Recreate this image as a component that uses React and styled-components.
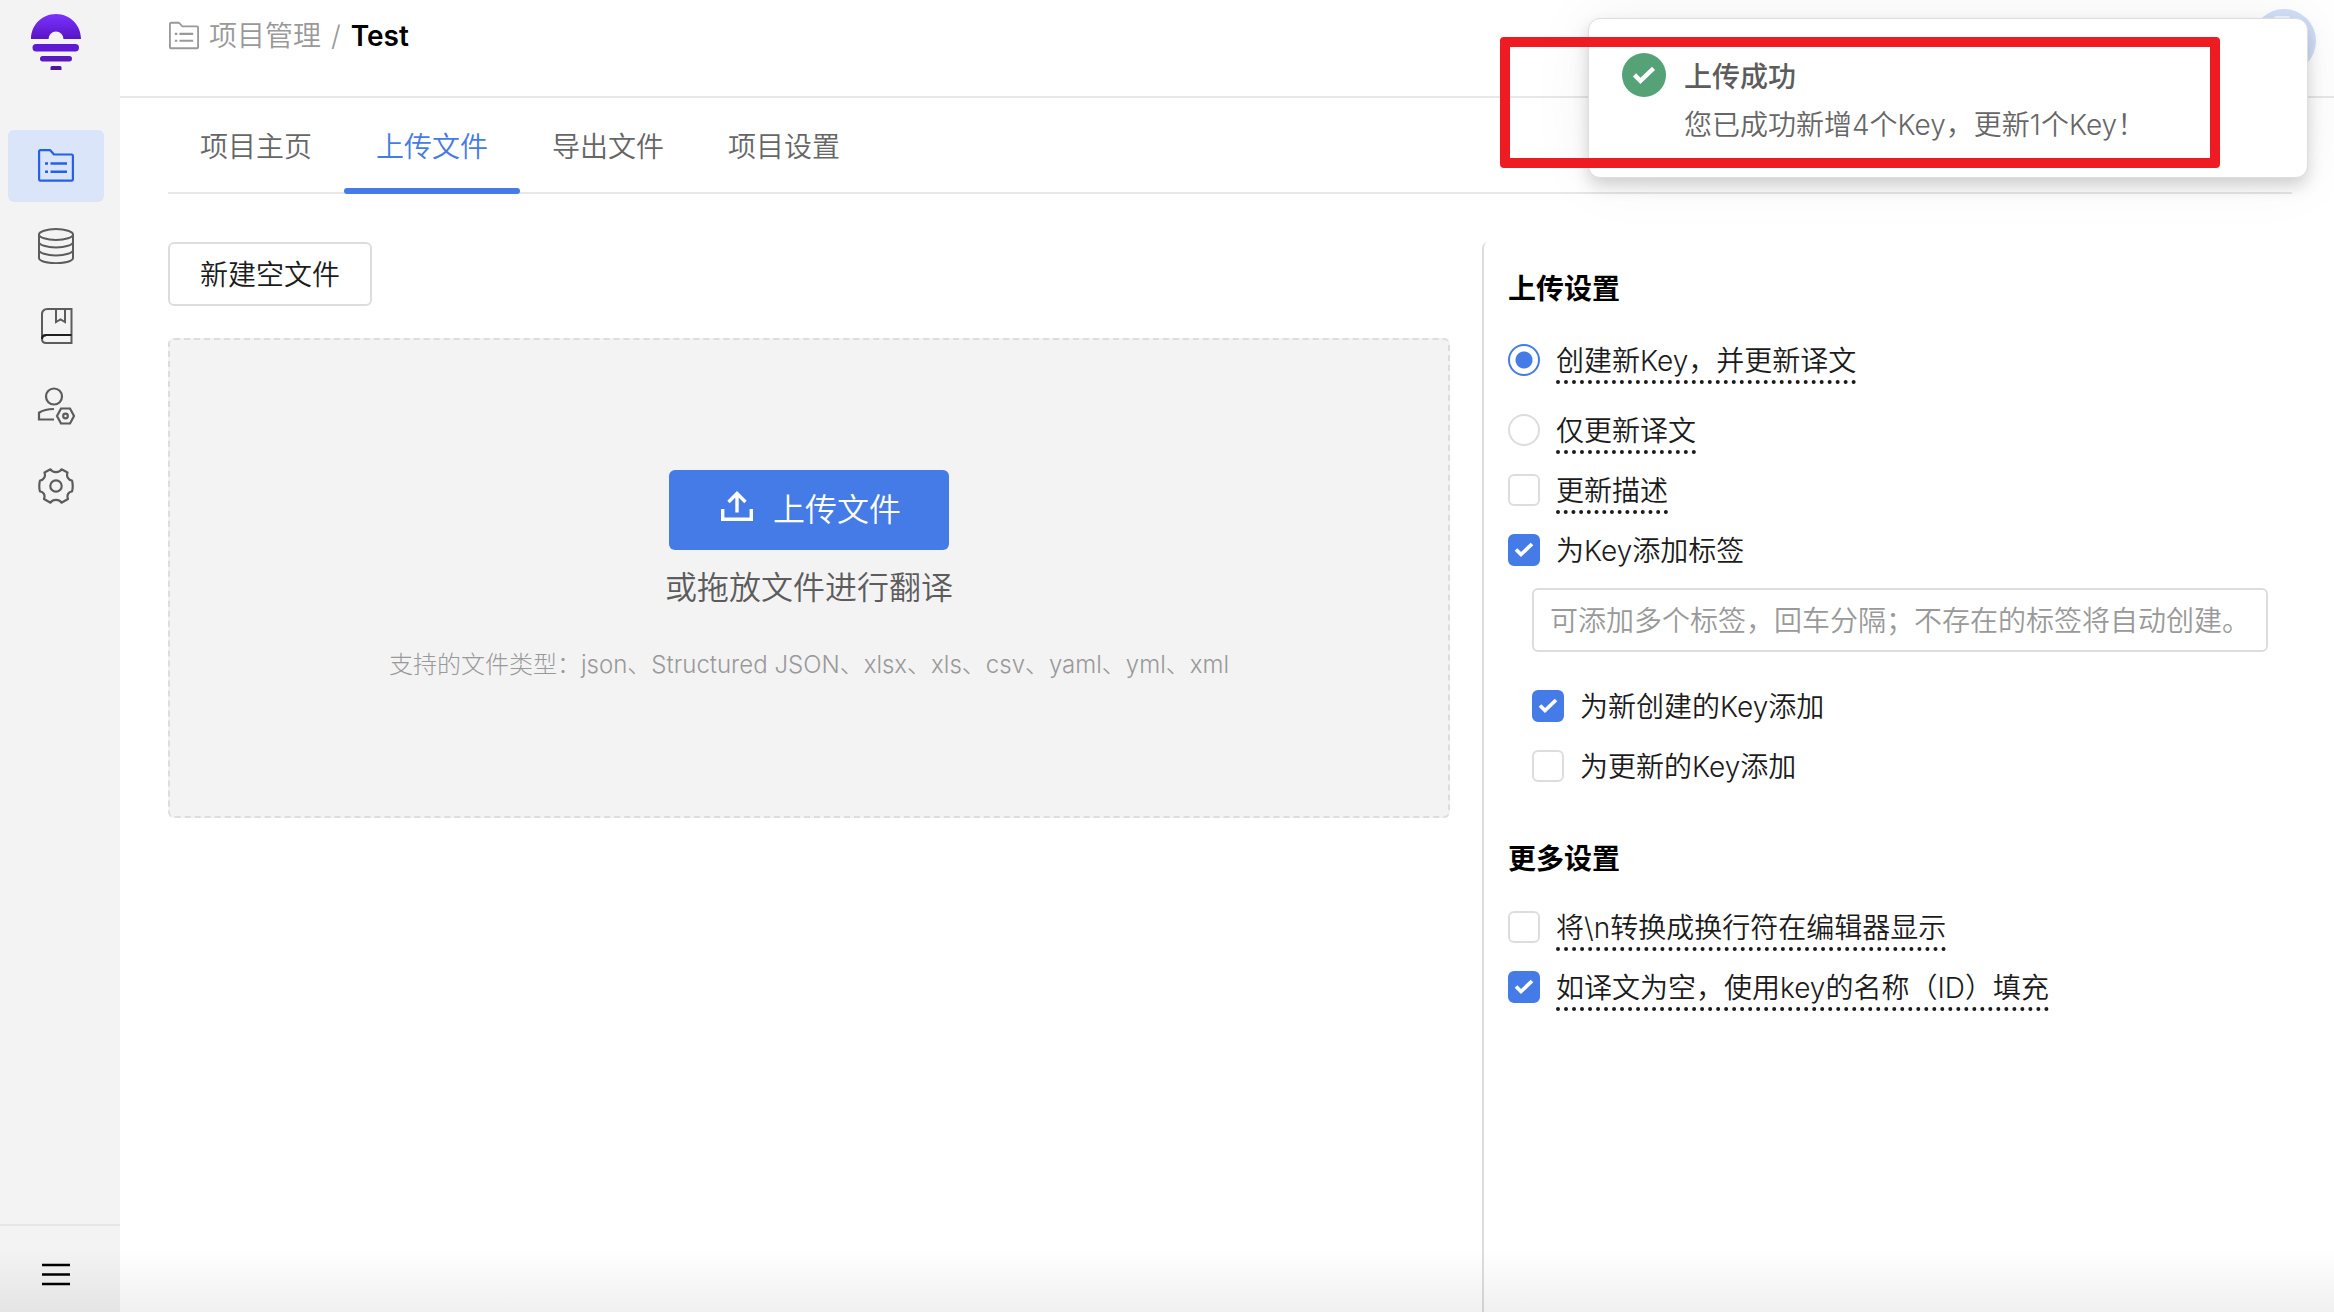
import React from "react";
import styled, { createGlobalStyle, css } from "styled-components";

const GlobalStyle = createGlobalStyle`
  * {
    box-sizing: border-box;
  }

  body {
    margin: 0;
    background: #fff;
    color: #1b1b1b;
    font-family: Inter, "Noto Sans CJK SC", sans-serif;
    font-size: 28px;
    font-weight: 350;
    line-height: 40px;
  }

  button,
  input {
    font: inherit;
  }

  a {
    color: inherit;
    text-decoration: none;
  }
`;

const FolderIcon = ({ size }) => (
  <svg width={size} height={size} viewBox="0 0 36 36" fill="none" stroke="currentColor" strokeWidth="2.2" strokeLinejoin="round">
    <path d="M1.1 4v27.4c0 .8.5 1.3 1.3 1.3h31.2c.8 0 1.3-.5 1.3-1.3V7.8c0-.8-.5-1.3-1.3-1.3H16L12 2.1H2.4c-.8 0-1.3.5-1.3 1.3z" />
    <path d="M7 15.5h3M12.5 15.5H29M7 23.7h3M12.5 23.7H29" strokeWidth="2.6" />
  </svg>
);

const DatabaseIcon = () => (
  <svg width="36" height="36" viewBox="0 0 36 36" fill="none" stroke="#5c5c5c" strokeWidth="2">
    <ellipse cx="18" cy="6.5" rx="17" ry="5.4" />
    <path d="M1 6.5v23.5c0 2.9 7.6 5.2 17 5.2s17-2.3 17-5.2V6.5" />
    <path d="M1 14c0 3 7.6 5.4 17 5.4S35 17 35 14M1 22c0 3 7.6 5.4 17 5.4S35 25 35 22" />
  </svg>
);

const BookIcon = () => (
  <svg width="36" height="36" viewBox="0 0 36 36" fill="none" stroke="#5c5c5c" strokeWidth="2">
    <path d="M4 31V6.5C4 3 6 1 9.5 1H33.5v34H8c-2.5 0-4-1.5-4-4s1.5-3.5 4-3.5" />
    <path d="M4 31c0-2.5 1.5-4 4-4h25.5" stroke="#1f1f1f" />
    <path d="M18 1v13l4.5-2.5 4.5 2.5V1" />
  </svg>
);

const MemberIcon = () => (
  <svg width="38" height="38" viewBox="0 0 38 38" fill="none" stroke="#5c5c5c" strokeWidth="2.2">
    <circle cx="17" cy="9.5" r="8" />
    <path d="M17 22C10 22.2 5.5 23.5 2 25.7V32.5h15" />
    <path d="M24 21.5h9l4 7.5-4 7.5h-9l-4-7.5z" />
    <circle cx="28.5" cy="29" r="2.3" />
  </svg>
);

const GearIcon = () => (
  <svg width="36" height="36" viewBox="0 0 36 36" fill="none" stroke="#5c5c5c" strokeWidth="2.2" strokeLinejoin="round">
    <path d="M12.5 1.3C14.5 5 21.5 5 23.5 1.3L29.5 4.5C28 8.5 30.500 12.2 34 12.5Q35.500 18 34 23.5C30.500 23.8 28.500 27 30 31L23.500 34.700C21 31 15 31 12.500 34.700L6 31C7.500 27 5.500 23.800 2 23.500Q.5 18 2 12.500C5.500 12.200 8 8.500 6.500 4.500Z" />
    <circle cx="18" cy="18" r="5.7" />
  </svg>
);

const Logo = () => (
  <svg width="50" height="56" viewBox="0 0 50 56">
    <defs>
      <linearGradient id="logo" x1="0" y1="0" x2="0" y2="1">
        <stop offset="0" stopColor="#7a33ff" />
        <stop offset="1" stopColor="#5a14c4" />
      </linearGradient>
    </defs>
    <path d="M0 25C0 11 11 0 25 0s25 11 25 25H32.5a7.5 7.5 0 0 0-15 0z" fill="url(#logo)" />
    <rect x="1.5" y="30" width="46.5" height="7.5" rx="3.7" fill="#5f18d4" />
    <rect x="9" y="42" width="32" height="5.5" rx="2.7" fill="#5919bd" />
    <path d="M19.5 56v-2.5q0-1.5 1.5-1.5h8q1.5 0 1.5 1.5V56z" fill="#4e159f" />
  </svg>
);

const MenuIcon = () => (
  <svg width="28" height="24" viewBox="0 0 28 24" stroke="#000" strokeWidth="2.6">
    <path d="M0 2h28M0 11.500h28M0 21h28" />
  </svg>
);

const UploadIcon = () => (
  <svg width="32" height="38" viewBox="0 0 32 38" fill="none" stroke="#fff" strokeWidth="3.4">
    <path d="M1.7 18v10.3h28.6V18M16 21.5V2.5M7.5 11L16 2.5l8.5 8.5" />
  </svg>
);

const Tick = ({ width = 20, height = 16 }) => (
  <svg width={width} height={height} viewBox="0 0 20 16" fill="none" stroke="#fff" strokeWidth="3.7">
    <path d="M2 7.5l5 5L18 2" />
  </svg>
);

const navItems = [
  { label: "项目管理", icon: <FolderIcon size={36} />, active: true },
  { label: "数据", icon: <DatabaseIcon /> },
  { label: "术语库", icon: <BookIcon /> },
  { label: "成员", icon: <MemberIcon /> },
  { label: "设置", icon: <GearIcon /> },
];

const tabs = ["项目主页", "上传文件", "导出文件", "项目设置"];

const Option = ({ type = "checkbox", name, checked, dotted, children }) => (
  <StyledOption>
    <Control>
      <ControlInput type={type} name={name} defaultChecked={checked} />
      {type === "checkbox" && <Tick />}
    </Control>
    <OptionText $dotted={dotted}>{children}</OptionText>
  </StyledOption>
);

const App = () => (
  <Page>
    <GlobalStyle />
    <Sidebar>
      <LogoLink href="#" aria-label="Home">
        <Logo />
      </LogoLink>
      <Nav>
        {navItems.map(({ label, icon, active }) => (
          <NavLink key={label} href="#" aria-label={label} $active={active}>
            {icon}
          </NavLink>
        ))}
      </Nav>
      <MenuButton aria-label="菜单">
        <MenuIcon />
      </MenuButton>
    </Sidebar>

    <Main>
      <Header>
        <Crumb href="#">
          <FolderIcon size={30} />
          项目管理
        </Crumb>
        <Slash>/</Slash>
        <Current>Test</Current>
        <Avatar viewBox="0 0 64 64">
          <circle cx="32" cy="32" r="32" fill="#d2dff8" />
          <rect x="22" y="7" width="16" height="6" rx="2" fill="#f0f4fd" />
        </Avatar>
      </Header>

      <Tabs>
        {tabs.map((tab) => (
          <Tab key={tab} href="#" $active={tab === "上传文件"}>
            {tab}
          </Tab>
        ))}
      </Tabs>

      <Content>
        <Files>
          <NewFileButton>新建空文件</NewFileButton>
          <DropZone>
            <UploadButton>
              <UploadIcon />
              上传文件
            </UploadButton>
            <DropText>或拖放文件进行翻译</DropText>
            <Hint>支持的文件类型：json、Structured JSON、xlsx、xls、csv、yaml、yml、xml</Hint>
          </DropZone>
        </Files>

        <Settings>
          <Title>上传设置</Title>
          <RadioGroup>
            <Option type="radio" name="mode" checked dotted>
              创建新Key，并更新译文
            </Option>
            <Option type="radio" name="mode" dotted>
              仅更新译文
            </Option>
          </RadioGroup>
          <Options>
            <Option dotted>更新描述</Option>
            <Option checked>为Key添加标签</Option>
          </Options>
          <TagSettings>
            <TagInput aria-label="标签" placeholder="可添加多个标签，回车分隔；不存在的标签将自动创建。" />
            <Options>
              <Option checked>为新创建的Key添加</Option>
              <Option>为更新的Key添加</Option>
            </Options>
          </TagSettings>
          <Title>更多设置</Title>
          <Options>
            <Option dotted>将\n转换成换行符在编辑器显示</Option>
            <Option checked dotted>
              如译文为空，使用key的名称（ID）填充
            </Option>
          </Options>
        </Settings>
      </Content>
    </Main>

    <Toast role="status">
      <ToastIcon>
        <Tick width={24} height={19} />
      </ToastIcon>
      <div>
        <ToastTitle>上传成功</ToastTitle>
        <ToastText>您已成功新增4个Key，更新1个Key！</ToastText>
      </div>
    </Toast>
    <Highlight />
    <BottomShade />
  </Page>
);

export default App;

const Page = styled.div`
  position: relative;
  display: flex;
  min-height: 100vh;
`;

const Sidebar = styled.aside`
  display: flex;
  flex-direction: column;
  flex: none;
  width: 120px;
  background: #f3f3f3;
`;

const LogoLink = styled.a`
  display: flex;
  padding: 14px 0 0 31px;
`;

const Nav = styled.nav`
  display: flex;
  flex-direction: column;
  gap: 8px;
  margin: 60px 16px 0 8px;
`;

const NavLink = styled.a`
  display: flex;
  align-items: center;
  justify-content: center;
  height: 72px;
  border-radius: 6px;
  color: #2461e6;
  background: ${({ $active }) => ($active ? "#dae5f9" : "transparent")};
`;

const MenuButton = styled.button`
  display: flex;
  align-items: center;
  height: 88px;
  margin-top: auto;
  padding: 12px 42px 0;
  border: 0;
  border-top: 2px solid #e7e7e7;
  background: none;
`;

const Main = styled.main`
  display: flex;
  flex-direction: column;
  flex: 1;
  min-width: 0;
`;

const Header = styled.header`
  display: flex;
  align-items: flex-start;
  height: 98px;
  padding: 16px 18px 0 49px;
  border-bottom: 2px solid #e7e7e7;
`;

const Crumb = styled.a`
  display: flex;
  align-items: center;
  gap: 10px;
  color: #999;
`;

const Slash = styled.span`
  margin: 0 10px;
  color: #999;
`;

const Current = styled.span`
  color: #000;
  font-weight: 600;
`;

const Avatar = styled.svg`
  width: 64px;
  height: 64px;
  margin: -7px 0 0 auto;
`;

const Tabs = styled.nav`
  display: flex;
  height: 96px;
  margin: 0 42px 0 48px;
  border-bottom: 2px solid #e7e7e7;
`;

const Tab = styled.a`
  position: relative;
  padding: 29px 32px 0;
  color: #666;

  ${({ $active }) =>
    $active &&
    css`
      color: #457be6;

      &::after {
        content: "";
        position: absolute;
        right: 0;
        bottom: -2px;
        left: 0;
        height: 6px;
        border-radius: 3px;
        background: #457be6;
      }
    `}
`;

const Content = styled.div`
  display: flex;
  flex: 1;
  gap: 32px;
  padding: 48px 42px 0 48px;
`;

const Files = styled.section`
  flex: 1;
  min-width: 0;
`;

const NewFileButton = styled.button`
  display: block;
  height: 64px;
  padding: 1px 30px 0;
  border: 2px solid #ddd;
  border-radius: 6px;
  background: #fff;
  color: #1b1b1b;
`;

const DropZone = styled.div`
  display: flex;
  flex-direction: column;
  align-items: center;
  height: 480px;
  margin-top: 32px;
  padding-top: 130px;
  border: 2px dashed #ddd;
  border-radius: 6px;
  background: #f3f3f3;
`;

const UploadButton = styled.button`
  display: flex;
  align-items: center;
  justify-content: center;
  gap: 20px;
  width: 280px;
  height: 80px;
  padding: 0 0 0 4px;
  border: 0;
  border-radius: 6px;
  background: #457be6;
  color: #fff;
  font-size: 32px;
`;

const DropText = styled.p`
  margin: 18px 0 0;
  color: #5c5c5c;
  font-size: 32px;
`;

const Hint = styled.p`
  margin: 37px 0 0;
  color: #999;
  font-size: 24px;
  font-weight: 300;
`;

const Settings = styled.section`
  width: 810px;
  padding: 27px 0 0 24px;
  border-left: 2px solid #ddd;
  border-top-left-radius: 6px;
`;

const Title = styled.h2`
  margin: 0 0 26px;
  color: #000;
  font-size: 28px;
  font-weight: 600;
`;

const Options = styled.div`
  display: flex;
  flex-direction: column;
  gap: 16px;
`;

const RadioGroup = styled(Options)`
  gap: 26px;
  margin: 29px 0 16px;
`;

const TagSettings = styled.div`
  margin: 16px 24px 51px;
`;

const StyledOption = styled.label`
  display: flex;
  align-items: flex-start;
  gap: 16px;
  height: 44px;
`;

const Control = styled.span`
  display: grid;
  place-items: center;
  margin-top: 6px;

  > * {
    grid-area: 1 / 1;
  }

  svg {
    pointer-events: none;
  }
`;

const ControlInput = styled.input`
  appearance: none;
  width: 32px;
  height: 32px;
  margin: 0;
  border: 2px solid #ddd;
  border-radius: ${({ type }) => (type === "radio" ? "50%" : "6px")};
  background: #fff;

  &:checked {
    border-color: #457be6;
    background: ${({ type }) =>
      type === "radio" ? "radial-gradient(#457be6 8px, #fff 9px)" : "#457be6"};
  }
`;

const OptionText = styled.span`
  height: 46px;
  padding-top: 3px;
  border-bottom: ${({ $dotted }) => ($dotted ? "4px dotted #1b1b1b" : "0")};
`;

const TagInput = styled.input`
  display: block;
  width: 100%;
  height: 64px;
  margin-bottom: 32px;
  padding: 1px 16px 0;
  border: 2px solid #ddd;
  border-radius: 6px;
  color: #1b1b1b;

  &::placeholder {
    color: #999;
    opacity: 1;
  }
`;

const Toast = styled.div`
  position: absolute;
  top: 18px;
  right: 26px;
  display: flex;
  gap: 18px;
  width: 720px;
  height: 160px;
  padding: 34px 33px;
  border: 1px solid #ddd;
  border-radius: 12px;
  background: #fff;
  box-shadow: 0 8px 16px rgba(0, 0, 0, 0.16), 0 0 64px rgba(0, 0, 0, 0.06);
`;

const ToastIcon = styled.div`
  display: flex;
  align-items: center;
  justify-content: center;
  width: 44px;
  height: 44px;
  border-radius: 50%;
  background: #54a275;
`;

const ToastTitle = styled.div`
  margin-top: 4px;
  color: #5c5c5c;
  font-weight: 500;
`;

const ToastText = styled.div`
  margin-top: 8px;
  color: #666;
`;

const Highlight = styled.div`
  position: absolute;
  top: 37px;
  right: 114px;
  width: 720px;
  height: 131px;
  border: 10px solid #ef1b22;
  border-radius: 4px;
`;

const BottomShade = styled.div`
  position: absolute;
  right: 0;
  bottom: 0;
  left: 0;
  height: 64px;
  background: linear-gradient(rgba(0, 0, 0, 0), rgba(0, 0, 0, 0.06));
  pointer-events: none;
`;
